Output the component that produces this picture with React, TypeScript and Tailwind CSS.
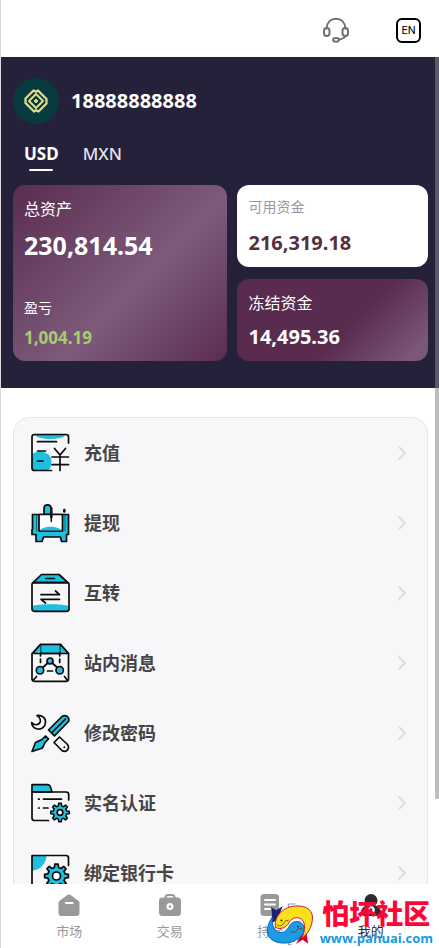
import { useState } from 'react';
import type { ReactNode } from 'react';

const CYAN = '#1fbfdf';

function gearPath(cx: number, cy: number, outer: number, inner: number, teeth: number) {
  const step = (Math.PI * 2) / teeth;
  const points: string[] = [];
  for (let i = 0; i < teeth; i += 1) {
    const mid = i * step - Math.PI / 2;
    const corners: [number, number][] = [
      [mid - step * 0.3, inner],
      [mid - step * 0.18, outer],
      [mid + step * 0.18, outer],
      [mid + step * 0.3, inner],
    ];
    corners.forEach(([angle, r]) => {
      points.push(`${(cx + Math.cos(angle) * r).toFixed(2)} ${(cy + Math.sin(angle) * r).toFixed(2)}`);
    });
  }
  return `M${points.join('L')}Z`;
}

function MenuIcon({ children }: { children: ReactNode }) {
  return (
    <svg
      viewBox="0 0 40 40"
      className="h-10 w-10 shrink-0"
      fill="none"
      stroke="#0b0b0b"
      strokeWidth="1.7"
      strokeLinecap="round"
      strokeLinejoin="round"
      aria-hidden="true"
    >
      {children}
    </svg>
  );
}

const menuItems: { label: string; icon: ReactNode }[] = [
  {
    label: '充值',
    icon: (
      <>
        <path d="M4 1.5H36C33 7.5 8 7.5 4 1.5Z" fill={CYAN} stroke="none" />
        <path d="M2 21C9 15.500 21.500 19 21.500 28.500C21.500 33 20 36 18 37.500H4.500Q2 37.500 2 35Z" fill={CYAN} stroke="none" />
        <path d="M38.500 10V4Q38.500 1.500 36 1.500H4.500Q2 1.500 2 4V35Q2 37.500 4.500 37.500H21.500" />
        <path d="M7.500 8.700H26.500M7.500 18H15.500M7.500 28H13" />
        <path d="M24.500 15.500L30 22L35.500 15.500M30 22V37.500M22 24H38.500M22 31.700H38.500" />
      </>
    ),
  },
  {
    label: '提现',
    icon: (
      <>
        <path d="M14 11.500V5.500Q14 1.800 17.500 1.800T21 5.500V11.500Z" fill={CYAN} />
        <path d="M2.500 11.500H38.500V31.500H36.500V38.500H31.500L30.500 34H13.500L12 38.500H6V31.500H2V26.500H2.500Z" fill={CYAN} />
        <path d="M9 11.500H32.500V28H9Z" fill="#fff" />
        <path d="M10 27.200C13 22.500 28 22.500 31.600 27.200Z" fill={CYAN} stroke="none" />
        <path d="M6.500 12V28M35 12V28" strokeWidth="0.500" />
        <path d="M21.300 5.500V14" strokeWidth="2.500" />
        <path d="M21.300 14V18.500" strokeWidth="1.500" />
        <path d="M34.300 7V8.500" strokeWidth="2.500" />
      </>
    ),
  },
  {
    label: '互转',
    icon: (
      <>
        <path d="M11.500 1.500H29L38 9.700H3Z" fill={CYAN} />
        <path d="M2 33C8 30.500 33 30.500 39 33V36Q39 38.300 36.500 38.300H4.500Q2 38.300 2 36Z" fill={CYAN} stroke="none" />
        <path d="M2 11.500Q2 9.700 4 9.700H37Q39 9.700 39 11.500V36Q39 38.300 36.500 38.300H4.500Q2 38.300 2 36Z" />
        <path d="M16 5.500H24.500M11 21.600H29.500L25.500 18M29.500 26.300H11L15.500 30" />
      </>
    ),
  },
  {
    label: '站内消息',
    icon: (
      <>
        <path d="M10.500 1.500H30.500L38.500 10.500V36Q38.500 38.300 36 38.300H4.500Q2 38.300 2 36V10.500Z" />
        <path d="M10.500 1.500H30.500V10.500H10.500Z" fill={CYAN} />
        <path d="M10.500 2V9L5 10.500L4 9.500ZM30.500 2V9L35.500 10.500L37 9.500Z" fill={CYAN} stroke="none" />
        <path d="M10.500 1.500L2.500 10.500H38.500L30.500 1.500" />
        <path d="M10.500 10.500V13M10.500 16V19.500M29.700 10.500V13M29.700 16V19.500" />
        <path d="M20 18L10 27M20 18L30 27M17.500 28H22.500M3 37.500L6.500 33.500M37.500 37.500L34.500 33.500" />
        <circle cx="20" cy="18" r="3" fill={CYAN} />
        <circle cx="10" cy="27.200" r="3.700" fill={CYAN} />
        <circle cx="29.700" cy="27.200" r="3.700" fill={CYAN} />
      </>
    ),
  },
  {
    label: '修改密码',
    icon: (
      <>
        <path d="M7 2.500C12 1.500 16 5.500 15.500 9.500C15.300 13.500 11.500 16.800 7.500 16C4 15.500 1.500 12.500 1.700 9.500C4 12.500 8.500 12.500 10 9.500C11 7 9.500 4 7 2.500Z" />
        <path d="M18.500 17L32 3.500Q34.500 1.800 37 3.200Q39.800 5.500 38.500 8.500L24.500 22.800Z" fill={CYAN} />
        <path d="M21.500 20L35.500 6" />
        <path d="M2 38.500L5.500 29.500L12 26.500L15.500 23L18.500 25.800L15 29.500L12.500 35Z" fill={CYAN} />
        <path d="M24 29.500L29.500 24L37.500 31.500Q39.500 34.500 37.500 37Q34.500 39.500 32 37.500Z" />
        <circle cx="34.300" cy="34.300" r="1" fill="#0b0b0b" stroke="none" />
      </>
    ),
  },
  {
    label: '实名认证',
    icon: (
      <>
        <path d="M2 1.700H18Q20 2 20.500 4L22 9H2Z" fill={CYAN} />
        <path d="M18.500 37.500H4.500Q2 37.500 2 35V9H36Q38.700 9 38.700 11.500V17" />
        <path d="M8.500 16.200H9.200M13.500 16.200H31.500M8.500 25H9.200M13.500 25H18" />
        <path d={gearPath(30, 29.5, 9.3, 6.8, 8)} fill={CYAN} strokeWidth="1.5" />
        <circle cx="30" cy="29.500" r="2.800" fill="#fff" />
      </>
    ),
  },
  {
    label: '绑定银行卡',
    icon: (
      <>
        <path d="M2 2.500H16.500C16.500 10 10 17.500 2 17.500Z" fill={CYAN} stroke="none" />
        <path d="M38.500 12.500V5Q38.500 2.500 36 2.500H2V37.500H14" />
        <path d={gearPath(26.5, 23, 12, 8.8, 8)} fill={CYAN} />
        <circle cx="26.500" cy="23" r="4" fill="#fff" />
      </>
    ),
  },
];

const navItems: { label: string; icon: ReactNode }[] = [
  {
    label: '市场',
    icon: (
      <>
        <path d="M12 1.500Q13 1.500 14 2.200L21 7.500Q22.500 8.500 22.500 10V20Q22.500 23 19.500 23H4.500Q1.500 23 1.500 20V10Q1.500 8.500 3 7.500L10 2.200Q11 1.500 12 1.500Z" />
        <path d="M9 10H15.500" stroke="#fff" strokeWidth="2.200" strokeLinecap="round" />
      </>
    ),
  },
  {
    label: '交易',
    icon: (
      <>
        <path d="M7.500 6V4.500Q7.500 2 10 2H14Q16.500 2 16.500 4.500V6" fill="none" stroke="currentColor" strokeWidth="2" />
        <rect x="1" y="4.500" width="22" height="18.500" rx="3.500" />
        <circle cx="12" cy="13.500" r="3.500" fill="#fff" />
        <circle cx="12" cy="13.500" r="1.200" />
      </>
    ),
  },
  {
    label: '持仓',
    icon: (
      <>
        <rect x="2.500" y="1" width="18.500" height="22" rx="3.500" />
        <path d="M7 7H17M7 11.500H17M7 16H12.500" stroke="#fff" strokeWidth="2" strokeLinecap="round" />
      </>
    ),
  },
  {
    label: '我的',
    icon: (
      <>
        <circle cx="12" cy="7.500" r="6.500" />
        <path d="M8 12H16Q22 15 22 19Q22 23 18 23H6Q2 23 2 19Q2 15 8 12Z" />
        <circle cx="12" cy="17" r="3.800" fill="#fff" />
        <path d="M12 14.500L13.500 17L12 19.500L10.500 17Z" />
      </>
    ),
  },
];

function Header() {
  return (
    <header className="flex h-[57px] shrink-0 items-center justify-end gap-[46px] bg-white pt-1 pr-[18px]">
      <button type="button" aria-label="客服">
        <svg viewBox="0 0 28 28" className="h-7 w-7" fill="none" stroke="#6f7073" strokeWidth="2" strokeLinecap="round" aria-hidden="true">
          <path d="M4.500 11.500C5 5 9 1.800 14 1.800S23 5 23.500 11.500" />
          <rect x="2" y="11" width="5.500" height="8" rx="2.700" />
          <rect x="20.500" y="11" width="5.500" height="8" rx="2.700" />
          <path d="M23.500 19C22.500 21.500 20 22 17 22.500" />
          <ellipse cx="14" cy="22.800" rx="3" ry="1.900" />
        </svg>
      </button>
      <button
        type="button"
        className="flex h-[25px] w-[25px] items-center justify-center rounded-md border-2 border-black font-[Roboto] text-[11px] leading-none font-normal text-black"
      >
        EN
      </button>
    </header>
  );
}

function Avatar() {
  return (
    <span className="flex h-[46px] w-[46px] items-center justify-center rounded-full bg-[#073b40]">
      <svg viewBox="0 0 26 26" className="h-[26px] w-[26px]" fill="none" stroke="#ded891" strokeLinejoin="round" aria-hidden="true">
        <path d="M13.500 4L10.500 2.500L2.500 10.500V15L11 23.500L13.500 22" strokeWidth="2.300" />
        <path d="M12.500 22L15.500 23.500L23.500 15.500V11L15 2.500L12.500 4" strokeWidth="2.300" />
        <path d="M13 6L20 13L13 20L6 13Z" strokeWidth="2" />
        <path d="M13 11V15M11 13H15" strokeWidth="1.800" />
      </svg>
    </span>
  );
}

function AccountPanel() {
  const [currency, setCurrency] = useState('USD');

  return (
    <section className="bg-[#25213b] pt-[21px] pr-[11px] pb-[27px] pl-3">
      <div className="flex items-center gap-3">
        <Avatar />
        <h1 className="text-xl font-bold text-white">18888888888</h1>
      </div>

      <div className="mt-[19px] flex gap-6 pl-[11px]" role="tablist" aria-label="币种">
        {['USD', 'MXN'].map((code) => (
          <button
            key={code}
            type="button"
            role="tab"
            aria-selected={code === currency}
            onClick={() => setCurrency(code)}
            className={`flex flex-col items-center gap-1 text-[17px] leading-[22px] ${
              code === currency ? 'font-bold text-white' : 'font-medium text-[#e4e1ee]'
            }`}
          >
            {code}
            <span className={`h-0.5 w-6 rounded-sm ${code === currency ? 'bg-white' : 'bg-transparent'}`} />
          </button>
        ))}
      </div>

      <div className="mt-[14px] grid grid-cols-[215fr_191fr] gap-[10px] text-white">
        <div className="flex min-h-44 flex-col rounded-xl bg-linear-[135deg,#5a2c50_0%,#7d5b7b_58%,#5a2c50_100%] px-[11px] pt-3 pb-[11px]">
          <p className="text-base leading-6">总资产</p>
          <p className="mt-2 text-[25px] leading-8 font-bold">230,814.54</p>
          <p className="mt-auto text-sm leading-5">盈亏</p>
          <p className="mt-2 text-[17px] leading-6 font-bold text-[#a5cf6b]">1,004.19</p>
        </div>
        <div className="flex flex-col gap-3">
          <div className="flex-1 rounded-xl bg-white px-[11px] pt-3">
            <p className="text-sm leading-5 text-[#97999c]">可用资金</p>
            <p className="mt-3 text-xl leading-7 font-bold text-[#572f3f]">216,319.18</p>
          </div>
          <div className="flex-1 rounded-xl bg-linear-[135deg,#582b4f_0%,#582b4f_58%,#7b5779_92%] px-[11px] pt-3">
            <p className="text-base leading-6">冻结资金</p>
            <p className="mt-2 text-xl leading-7 font-bold">14,495.36</p>
          </div>
        </div>
      </div>
    </section>
  );
}

function MenuList() {
  return (
    <ul className="mt-[29px] mr-[11px] ml-3 rounded-2xl border border-[#e8e4ec] bg-[#f7f6f9]">
      {menuItems.map((item) => (
        <li key={item.label}>
          <button type="button" className="flex h-[70px] w-full items-center pr-5 pl-4 text-left">
            <MenuIcon>{item.icon}</MenuIcon>
            <span className="ml-[14px] flex-1 text-[18px] leading-6 font-bold text-[#454546]">{item.label}</span>
            <svg viewBox="0 0 10 16" className="h-4 w-[10px]" fill="none" stroke="#dededf" strokeWidth="2" aria-hidden="true">
              <path d="M1.500 1.500L8 8L1.500 14.500" />
            </svg>
          </button>
        </li>
      ))}
    </ul>
  );
}

function Watermark() {
  return (
    <div className="pointer-events-none absolute right-[6px] bottom-0 flex items-center gap-[6px]">
      <svg viewBox="138 210 144 130" className="h-[43px] w-12" fill="none" aria-hidden="true">
        <path d="M205 222V213H226M205 326V336H214" stroke="#6a4fa8" strokeWidth="2" />
        <path d="M153 222L168 232L188 220L180 240L172 262L150 272L156 248Z" fill="#18246f" />
        <path d="M264 282L261 308L265 333L248 321L228 334L240 312L254 298Z" fill="#d9001f" />
        <path
          d="M166 284C160 252 190 218 232 219C264 218 279 236 278 256C277 282 264 304 244 318C256 298 258 272 246 260C234 250 216 254 208 268C200 284 182 292 166 284Z"
          fill="#fbe01b"
          stroke="#c8143a"
          strokeWidth="3"
        />
        <path
          d="M156 254C144 270 138 292 144 308C154 328 182 334 206 330C236 325 254 304 252 284C250 268 234 262 220 268C206 274 206 292 192 298C174 304 154 292 156 254Z"
          fill="#1a9be3"
          stroke="#1262b8"
          strokeWidth="3"
        />
        <path d="M170 276Q184 284 190 272Q194 262 206 262M212 296Q226 302 230 292Q238 284 248 288" stroke="#5b4a1c" strokeWidth="2.500" />
        <circle cx="184" cy="263" r="3" fill="#33260a" />
        <circle cx="234" cy="281" r="3" fill="#0a2c55" />
      </svg>
      <div className="flex flex-col items-center">
        <span className="text-[27px] leading-7 font-black text-[#ff0535]">怕坏社区</span>
        <span className="font-['Open_Sans'] text-[13px] leading-5 font-bold text-[#1699e0]">www.pahuai.com</span>
      </div>
    </div>
  );
}

function BottomNav() {
  const [active, setActive] = useState('我的');

  return (
    <nav className="relative h-16 shrink-0 bg-white">
      <div className="flex h-full px-[18px]">
        {navItems.map((item) => (
          <button
            key={item.label}
            type="button"
            onClick={() => setActive(item.label)}
            className={`flex flex-1 flex-col items-center gap-1 pt-[9px] text-[13px] leading-5 ${
              item.label === active ? 'text-[#2c2c2e]' : 'text-[#99999a]'
            }`}
          >
            <svg viewBox="0 0 24 24" className="h-6 w-6" fill="currentColor" aria-hidden="true">
              {item.icon}
            </svg>
            {item.label}
          </button>
        ))}
      </div>
      <Watermark />
    </nav>
  );
}

export default function App() {
  return (
    <div className="relative flex h-screen flex-col border-l border-[#dcd9e0] bg-white font-['Noto_Sans','Noto_Sans_CJK_SC',sans-serif]">
      <Header />
      <main className="min-h-0 flex-1 overflow-y-auto [scrollbar-width:none]">
        <AccountPanel />
        <MenuList />
      </main>
      <BottomNav />
      {/* scroll thumb floats over the content */}
      <div className="pointer-events-none absolute top-[57px] right-0 h-[742px] w-1 bg-[#888]/55" />
    </div>
  );
}
